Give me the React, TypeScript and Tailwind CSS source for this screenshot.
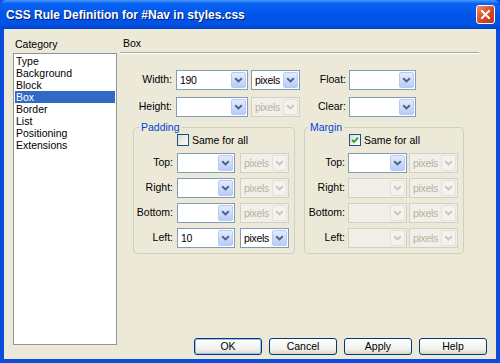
import React from "react";

const chevron = (color: string) => (
  <svg width="9" height="6" viewBox="0 0 9 6">
    <path d="M1.2 1.2L4.5 4.4L7.8 1.2" fill="none" stroke={color} strokeWidth="1.9" />
  </svg>
);

function Combo({
  w,
  value = "",
  disabled = false,
}: {
  w: string;
  value?: string;
  disabled?: boolean;
}) {
  return (
    <div
      className={
        "flex h-[20px] items-stretch border p-px " +
        w +
        (disabled ? " border-[#d2d0c4] bg-[#f1f0e8]" : " border-[#7f9db9] bg-white")
      }
    >
      <div
        className={
          "flex-1 overflow-hidden whitespace-nowrap pl-[2px] leading-[16px] tracking-[-0.3px] " +
          (disabled ? "text-[#b4b2a6]" : "text-black")
        }
      >
        {value}
      </div>
      {disabled ? (
        <div className="flex w-[15px] shrink-0 items-center justify-center rounded-[2px] border border-[#e3e2da] bg-[#f3f2ec]">
          {chevron("#c9c7bc")}
        </div>
      ) : (
        <div className="flex w-[15px] shrink-0 items-center justify-center rounded-[2px] border border-[#b9c9f3] bg-[linear-gradient(to_bottom,#e3ebfe,#b8ccf8)]">
          {chevron("#4d6185")}
        </div>
      )}
    </div>
  );
}

function Check({ checked, label }: { checked?: boolean; label: string }) {
  return (
    <div className="flex h-[12px] items-center">
      <div className="flex h-[12px] w-[12px] items-center justify-center border border-[#1c5180] bg-[linear-gradient(135deg,#dcdbd5,#ffffff)]">
        {checked && (
          <svg width="8" height="8" viewBox="0 0 8 8">
            <path d="M1 3.8L3 6L7 1.6" fill="none" stroke="#21a121" strokeWidth="1.8" />
          </svg>
        )}
      </div>
      <span className="ml-[3px] leading-[12px]">{label}</span>
    </div>
  );
}

const paddingRows = [
  { label: "Top:", value: "", unit: false },
  { label: "Right:", value: "", unit: false },
  { label: "Bottom:", value: "", unit: false },
  { label: "Left:", value: "10", unit: true },
];

const marginRows = ["Top:", "Right:", "Bottom:", "Left:"];

const categories = [
  "Type",
  "Background",
  "Block",
  "Box",
  "Border",
  "List",
  "Positioning",
  "Extensions",
];

function Btn({ label, isDefault }: { label: string; isDefault?: boolean }) {
  return (
    <div
      className={
        "flex h-[17px] w-[68px] items-center justify-center rounded-[3px] border border-[#003c74] bg-[linear-gradient(to_bottom,#ffffff,#f0f0ea_70%,#d8d5c8)] leading-none" +
        (isDefault ? " shadow-[inset_0_0_0_1px_#9ebef5]" : "")
      }
    >
      {label}
    </div>
  );
}

export default function App() {
  return (
    <div className="flex h-[363px] w-[500px] flex-col overflow-hidden bg-[#0b4cdc] font-['Liberation_Sans',Arial,sans-serif] text-[10.5px] text-black">
      <div className="flex h-[29px] items-center rounded-t-[6px] bg-[linear-gradient(to_bottom,#4a9bff_0%,#0a62f2_12%,#0056ea_50%,#0052e4_85%,#0040c4_100%)] pl-[6px] pr-[5px]">
        <span className="text-[12px] font-bold text-white [text-shadow:1px_1px_0_#0a1a6a]">
          CSS Rule Definition for #Nav in styles.css
        </span>
        <div className="ml-auto flex h-[19px] w-[19px] items-center justify-center rounded-[3px] border border-white bg-[linear-gradient(135deg,#f0906f,#d6461f_55%,#c1361a)]">
          <svg width="11" height="11" viewBox="0 0 11 11">
            <path d="M2 2L9 9M9 2L2 9" stroke="#ffffff" strokeWidth="2" strokeLinecap="square" />
          </svg>
        </div>
      </div>

      <div className="mx-[4px] flex h-[330px] bg-[#ece9d8] pl-[9px] pt-[8px]">
        {/* category list */}
        <div className="flex flex-col">
          <div className="h-[16px] pl-[2px] leading-[14px]">Category</div>
          <div className="h-[292px] w-[104px] border border-[#8f969c] bg-white px-px pt-px">
            {categories.map((c) => (
              <div
                key={c}
                className={
                  "h-[12px] pl-[1px] leading-[12px] " +
                  (c === "Box" ? "bg-[#316ac5] text-white" : "")
                }
              >
                {c}
              </div>
            ))}
          </div>
        </div>

        {/* panel */}
        <div className="ml-[3px] flex flex-1 flex-col pb-[4px]">
          <div className="h-[15px] pl-[3px] leading-[12px]">Box</div>
          <div className="w-[359px] border-b border-t border-b-white border-t-[#aca899]" />

          <div className="mt-[16px] flex h-[20px] items-center">
            <div className="w-[52px] text-right">Width:</div>
            <div className="ml-[4px]">
              <Combo w="w-[72px]" value="190" />
            </div>
            <div className="ml-[3px]">
              <Combo w="w-[49px]" value="pixels" />
            </div>
            <div className="w-[46px] text-right">Float:</div>
            <div className="ml-[3px]">
              <Combo w="w-[67px]" />
            </div>
          </div>
          <div className="mt-[7px] flex h-[20px] items-center">
            <div className="w-[52px] text-right">Height:</div>
            <div className="ml-[4px]">
              <Combo w="w-[72px]" />
            </div>
            <div className="ml-[3px]">
              <Combo w="w-[49px]" value="pixels" disabled />
            </div>
            <div className="w-[46px] text-right">Clear:</div>
            <div className="ml-[3px]">
              <Combo w="w-[67px]" />
            </div>
          </div>

          <div className="ml-[13px] mt-[3px] flex gap-[9px]">
            <fieldset className="w-[162px] rounded-[4px] border border-[#d0d0bf] pb-[5px]">
              <legend className="ml-[5px] px-[2px] leading-[14px] text-[#0046d5]">Padding</legend>
              <div className="pl-[43px]">
                <Check label="Same for all" />
              </div>
              <div className="mt-[7px] flex flex-col gap-[5px]">
                {paddingRows.map((r) => (
                  <div key={r.label} className="flex h-[20px] items-center">
                    <div className="w-[39px] text-right">{r.label}</div>
                    <div className="ml-[4px]">
                      <Combo w="w-[58px]" value={r.value} />
                    </div>
                    <div className="ml-[5px]">
                      <Combo w="w-[49px]" value="pixels" disabled={!r.unit} />
                    </div>
                  </div>
                ))}
              </div>
            </fieldset>

            <fieldset className="w-[160px] rounded-[4px] border border-[#d0d0bf] pb-[5px]">
              <legend className="ml-[3px] px-[2px] leading-[14px] text-[#0046d5]">Margin</legend>
              <div className="pl-[44px]">
                <Check checked label="Same for all" />
              </div>
              <div className="mt-[7px] flex flex-col gap-[5px]">
                {marginRows.map((l, i) => (
                  <div key={l} className="flex h-[20px] items-center">
                    <div className="w-[40px] text-right">{l}</div>
                    <div className="ml-[3px]">
                      <Combo w="w-[59px]" disabled={i > 0} />
                    </div>
                    <div className="ml-[2px]">
                      <Combo w="w-[49px]" value="pixels" disabled />
                    </div>
                  </div>
                ))}
              </div>
            </fieldset>
          </div>

          <div className="mt-auto flex justify-end gap-[7px] pr-[9px]">
            <Btn label="OK" isDefault />
            <Btn label="Cancel" />
            <Btn label="Apply" />
            <Btn label="Help" />
          </div>
        </div>
      </div>
    </div>
  );
}
